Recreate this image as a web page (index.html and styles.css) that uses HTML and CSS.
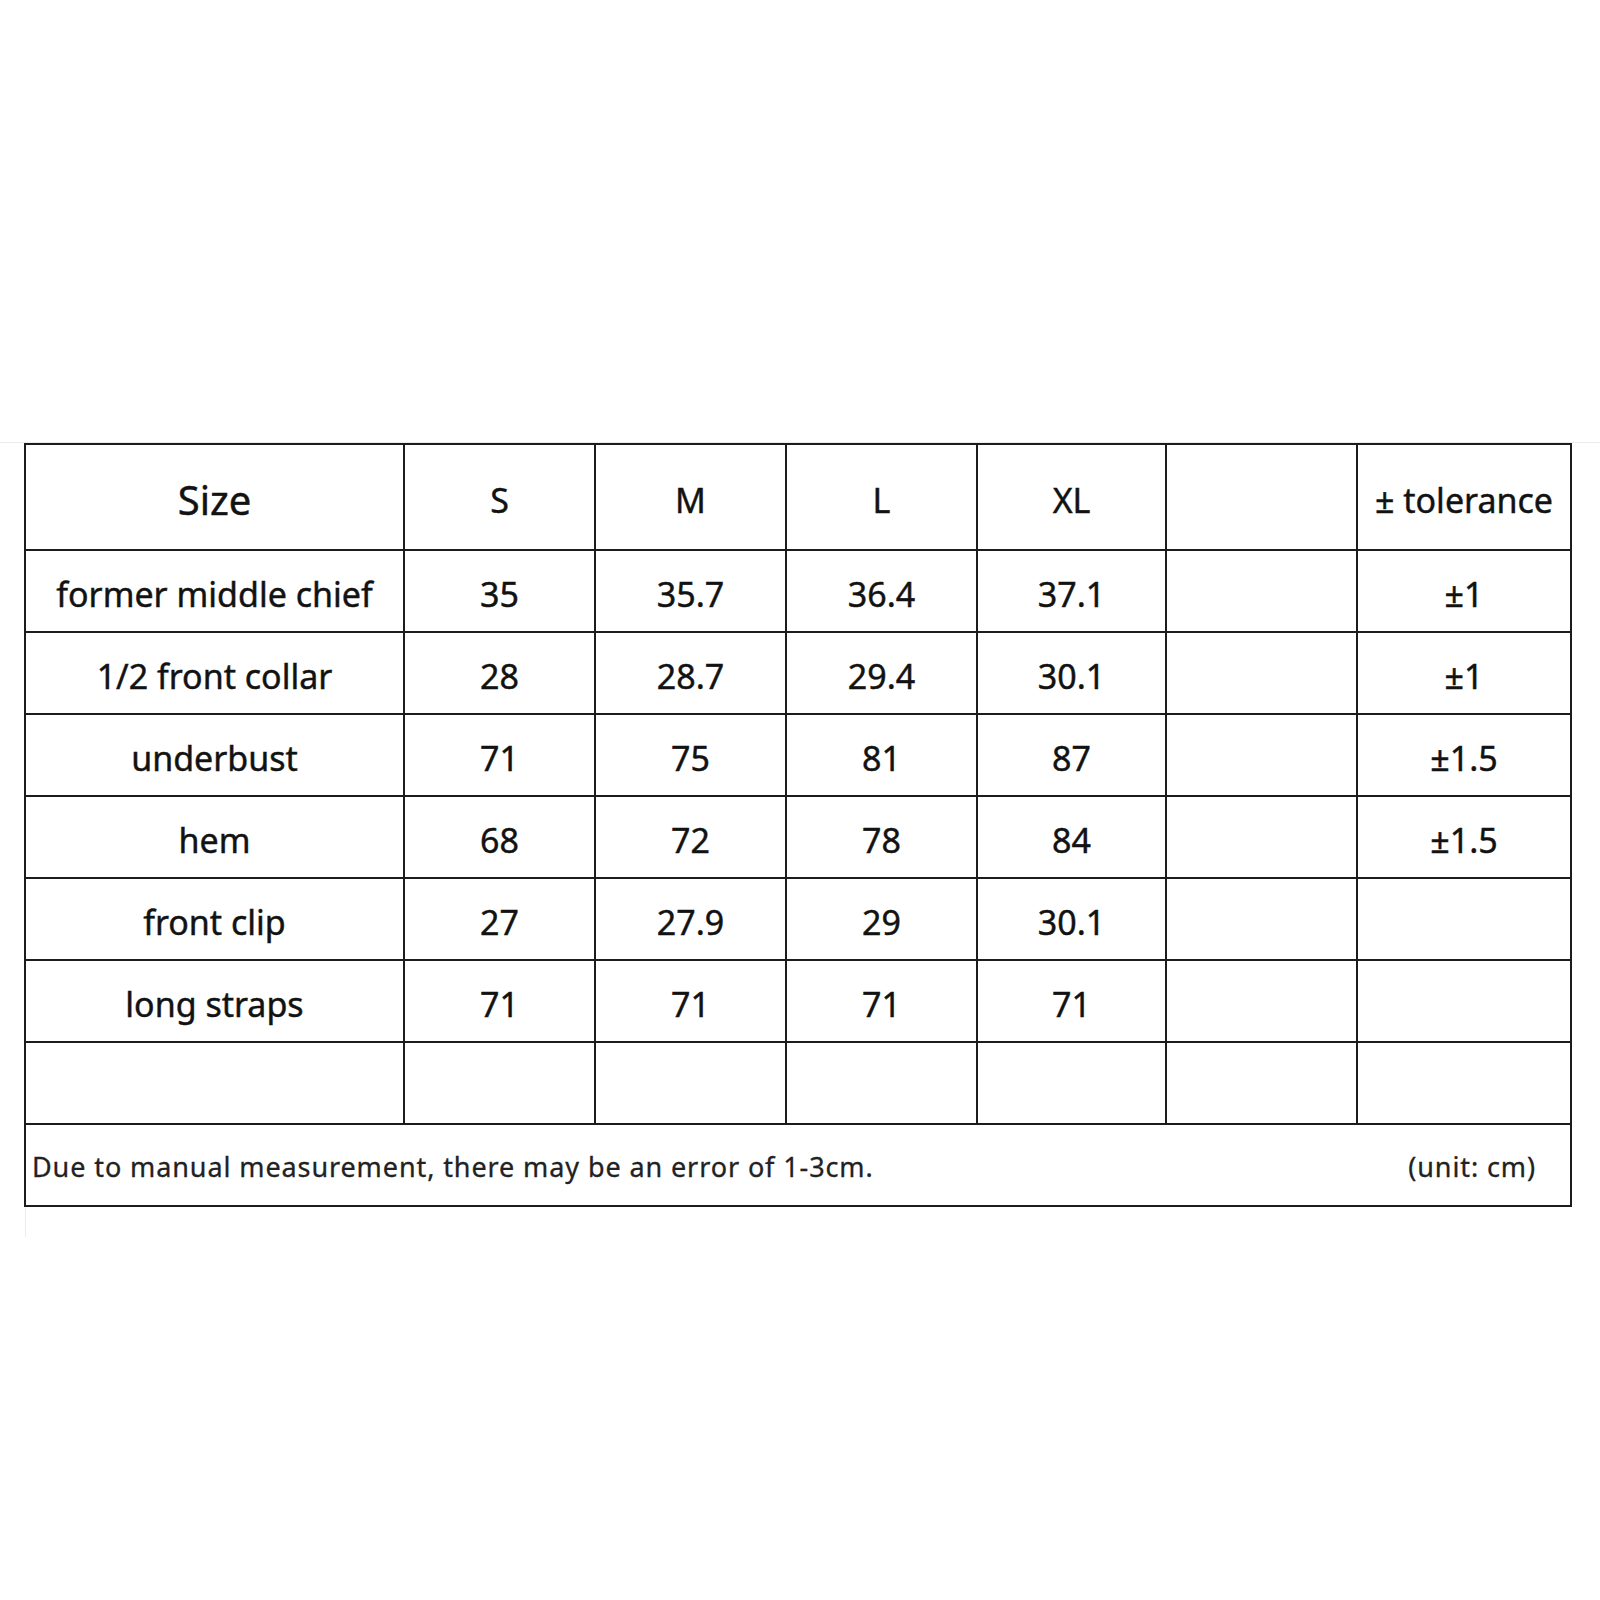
FILE: index.html
```html
<!DOCTYPE html>
<html>
<head>
<meta charset="utf-8">
<link rel="stylesheet" href="styles.css">
</head>
<body>
<div class="page">
  <div class="rule"></div>
  <table class="chart">
    <colgroup>
      <col class="c-name"><col class="c-size"><col class="c-size"><col class="c-size"><col class="c-size5"><col class="c-size"><col class="c-tol">
    </colgroup>
    <tr class="head">
      <td class="size-label">Size</td><td>S</td><td>M</td><td>L</td><td>XL</td><td></td><td>± tolerance</td>
    </tr>
    <tr><td>former middle chief</td><td>35</td><td>35.7</td><td>36.4</td><td>37.1</td><td></td><td>±1</td></tr>
    <tr><td>1/2 front collar</td><td>28</td><td>28.7</td><td>29.4</td><td>30.1</td><td></td><td>±1</td></tr>
    <tr><td>underbust</td><td>71</td><td>75</td><td>81</td><td>87</td><td></td><td>±1.5</td></tr>
    <tr><td>hem</td><td>68</td><td>72</td><td>78</td><td>84</td><td></td><td>±1.5</td></tr>
    <tr><td>front clip</td><td>27</td><td>27.9</td><td>29</td><td>30.1</td><td></td><td></td></tr>
    <tr><td>long straps</td><td>71</td><td>71</td><td>71</td><td>71</td><td></td><td></td></tr>
    <tr><td></td><td></td><td></td><td></td><td></td><td></td><td></td></tr>
    <tr class="foot">
      <td colspan="7">
        <div class="foot-inner">
          <span>Due to manual measurement, there may be an error of 1-3cm.</span>
          <span>(unit: cm)</span>
        </div>
      </td>
    </tr>
  </table>
  <div class="tail"></div>
</div>
</body>
</html>
```

FILE: styles.css
```css
html, body {
  margin: 0;
  padding: 0;
  background: #ffffff;
}
body {
  width: 1600px;
  height: 1600px;
  font-family: "Noto Sans", "Open Sans", sans-serif;
  color: #121212;
}
.page {
  padding-top: 442px;
}
.rule {
  height: 1px;
  background: #ebebeb;
}
.chart {
  margin-left: 24px;
  width: 1546px;
  border-collapse: collapse;
  table-layout: fixed;
}
.c-name { width: 379px; }
.c-size { width: 191px; }
.c-size5 { width: 189px; }
.c-tol { width: 214px; }
.chart td {
  border: 2px solid #1c1c1c;
  text-align: center;
  vertical-align: middle;
  height: 80px;
  padding: 0;
  font-size: 34px;
  font-weight: 400;
  -webkit-text-stroke: 0.45px #121212;
  line-height: 1;
  white-space: nowrap;
  overflow: hidden;
}
.chart tr:not(.head):not(.foot) td {
  padding-top: 5px;
  height: 75px;
}
.head td {
  height: 98px;
  font-size: 34px;
  padding-top: 6px;
}
.head td.size-label {
  font-size: 40px;
}
.foot td {
  height: 80px;
  text-align: left;
  font-size: 27px;
  letter-spacing: 0.9px;
  -webkit-text-stroke: 0.3px #222;
  color: #222;
  padding-top: 2px;
  height: 78px;
}
.foot-inner {
  display: flex;
  justify-content: space-between;
  padding: 0 34px 0 6px;
}
.tail {
  margin-left: 25px;
  width: 1px;
  height: 30px;
  background: #ececec;
}
```
